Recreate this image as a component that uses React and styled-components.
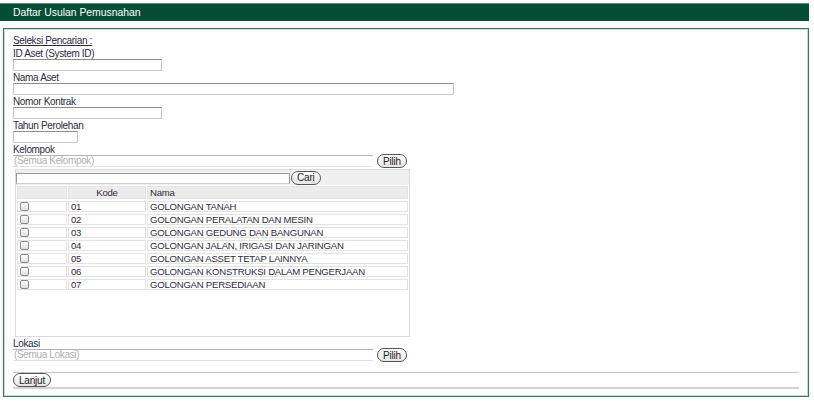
import React from 'react';
import styled, { createGlobalStyle } from 'styled-components';

const GlobalStyle = createGlobalStyle`
  body {
    margin: 0;
    background: #fff;
    font-family: "Liberation Sans", Arial, sans-serif;
  }
`;

const Page = styled.div`
  width: 809px;
  padding-top: 3px;
`;

const TitleBar = styled.div`
  height: 18px;
  line-height: 18px;
  background: #044e36;
  border-top: 1px solid #5f8a7b;
  box-sizing: border-box;
  color: #fff;
  font-size: 10.4px;
  padding-left: 13px;
`;

const Panel = styled.div`
  margin: 7px 0 0 3px;
  height: 369px;
  box-sizing: border-box;
  border: 1px solid #3f7560;
  box-shadow: inset 0 0 0 1px #c9dad2, 0 2px 2px #d4d4d4;
  padding: 6px 10px 0 9px;
  font-size: 10px;
  letter-spacing: -0.35px;
  color: #2c2c40;
`;

const Legend = styled.div`
  height: 12px;
  line-height: 12px;
  text-decoration: underline;
`;

const Label = styled.div`
  height: 12px;
  line-height: 13px;
`;

const Input = styled.div`
  width: ${p => p.$w}px;
  height: 12px;
  box-sizing: border-box;
  border: 1px solid #c6c6c6;
  border-top-color: #8f8f8f;
  background: #fff;
`;

const PickRow = styled.div`
  display: flex;
  align-items: center;
  gap: 4px;
  height: 12px;
`;

const PickField = styled.div`
  width: 360px;
  height: 12px;
  box-sizing: border-box;
  border-top: 1px solid #b3b3b3;
  border-bottom: 1px solid #e2e2e2;
  color: #b0b0b0;
  line-height: 10px;
  padding-left: 1px;
`;

const Button = styled.button`
  height: 14px;
  box-sizing: border-box;
  padding: 0 5px;
  border: 1px solid #555;
  border-radius: 8px;
  background: linear-gradient(#ffffff, #e6e6e6);
  font-family: "Liberation Sans", Arial, sans-serif;
  font-size: 10px;
  letter-spacing: -0.2px;
  line-height: 11px;
  color: #222;
  cursor: pointer;
`;

const Box = styled.div`
  margin: 2px 0 0 2px;
  width: 395px;
  height: 168px;
  box-sizing: border-box;
  border: 1px solid #dcdcdc;
  background: #fff;
  font-size: 9.6px;
  letter-spacing: -0.25px;
`;

const SearchBar = styled.div`
  display: flex;
  align-items: center;
  gap: 1px;
  height: 15px;
  background: #f0f0f0;
`;

const SearchInput = styled.div`
  width: 274px;
  height: 11px;
  margin-top: 1px;
  box-sizing: border-box;
  border: 1px solid #9a9a9a;
  border-bottom-color: #cfcfcf;
  background: #fff;
`;

const Table = styled.table`
  width: 100%;
  border-collapse: separate;
  border-spacing: 1px 2px;
  margin-top: -1px;
  font-size: inherit;
  color: inherit;
`;

const HeadCell = styled.th`
  height: 11px;
  padding: 0 2px;
  background: #ececec;
  border: 1px solid #e4e4e4;
  font-weight: normal;
  text-align: ${p => p.$center ? 'center' : 'left'};
  width: ${p => p.$w}px;
  line-height: 11px;
`;

const Cell = styled.td`
  height: 8.6px;
  padding: 0 2px;
  border: 1px solid #e2e2e2;
  line-height: 9px;
  white-space: nowrap;
`;

const Check = styled.span`
  display: block;
  width: 9px;
  height: 9px;
  box-sizing: border-box;
  border: 1px solid #8a8a8a;
  border-radius: 2px;
  background: linear-gradient(#ffffff, #dedede);
`;

const ActionBar = styled.div`
  margin-top: 11px;
  width: 786px;
  height: 17px;
  box-sizing: border-box;
  border-top: 1px solid #c4c4c4;
  border-bottom: 2px solid #d4d4d4;
  display: flex;
  align-items: center;
`;

const golongan = [
  ['01', 'GOLONGAN TANAH'],
  ['02', 'GOLONGAN PERALATAN DAN MESIN'],
  ['03', 'GOLONGAN GEDUNG DAN BANGUNAN'],
  ['04', 'GOLONGAN JALAN, IRIGASI DAN JARINGAN'],
  ['05', 'GOLONGAN ASSET TETAP LAINNYA'],
  ['06', 'GOLONGAN KONSTRUKSI DALAM PENGERJAAN'],
  ['07', 'GOLONGAN PERSEDIAAN'],
];

export default function App() {
  return (
    <Page>
      <GlobalStyle />
      <TitleBar>Daftar Usulan Pemusnahan</TitleBar>
      <Panel>
        <Legend>Seleksi Pencarian :</Legend>
        <Label>ID Aset (System ID)</Label>
        <Input $w={149} />
        <Label>Nama Aset</Label>
        <Input $w={441} />
        <Label>Nomor Kontrak</Label>
        <Input $w={149} />
        <Label>Tahun Perolehan</Label>
        <Input $w={65} />
        <Label>Kelompok</Label>
        <PickRow>
          <PickField>(Semua Kelompok)</PickField>
          <Button>Pilih</Button>
        </PickRow>
        <Box>
          <SearchBar>
            <SearchInput />
            <Button>Cari</Button>
          </SearchBar>
          <Table>
            <thead>
              <tr>
                <HeadCell $w={44} />
                <HeadCell $w={72} $center>Kode</HeadCell>
                <HeadCell>Nama</HeadCell>
              </tr>
            </thead>
            <tbody>
              {golongan.map(([kode, nama]) => (
                <tr key={kode}>
                  <Cell><Check /></Cell>
                  <Cell>{kode}</Cell>
                  <Cell>{nama}</Cell>
                </tr>
              ))}
            </tbody>
          </Table>
        </Box>
        <Label>Lokasi</Label>
        <PickRow>
          <PickField>(Semua Lokasi)</PickField>
          <Button>Pilih</Button>
        </PickRow>
        <ActionBar>
          <Button>Lanjut</Button>
        </ActionBar>
      </Panel>
    </Page>
  );
}
